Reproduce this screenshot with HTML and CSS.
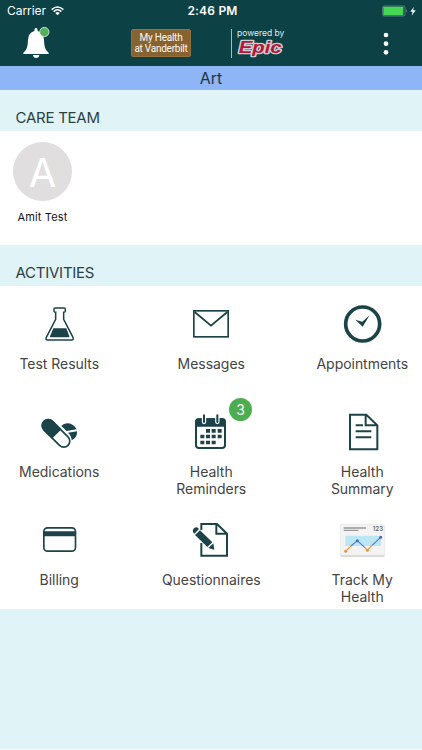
FILE: index.html
```html
<!DOCTYPE html>
<html lang="en">
<head>
<meta charset="utf-8">
<title>My Health</title>
<link rel="stylesheet" href="styles.css">
</head>
<body>
<header class="top">
  <div class="status">
    <div class="carrier"><span>Carrier</span>
      <svg width="13" height="10" viewBox="0 0 39 30"><g fill="none" stroke="#fff" stroke-width="4.500"><path d="M2 11Q19.500-5 37 11"/><path d="M8 17Q19.500 6 31 17"/></g><path d="M13 21Q19.500 15 26 21L19.500 28Z" fill="#fff"/></svg>
    </div>
    <div class="time">2:46 PM</div>
    <div class="power">
      <svg width="36" height="12" viewBox="0 0 108 36"><rect x="2" y="3" width="67" height="30" rx="5" fill="none" stroke="#7c9b9c" stroke-width="2"/><rect x="4" y="5" width="60" height="26" rx="2" fill="#45d754"/><path d="M73 13q5 5 0 10z" fill="#7c9b9c"/><path d="M96 5L85 20h7l-3 12 12-16h-8z" fill="#fff"/></svg>
    </div>
  </div>
  <div class="bar">
    <svg class="bell" width="30" height="36" viewBox="0 0 90 108"><path d="M40 18q0-9 5-9t5 9q18 5 19 26c1 26 5 31 14 39v4H7v-4c9-8 13-13 14-39q1-21 19-26zM36 90h19q-1 9-9.500 9T36 90z" fill="#fff"/><circle cx="70" cy="21" r="14" fill="#57ae5b" stroke="#dcebdc" stroke-width="2.500"/></svg>
    <div class="brand">My Health<br>at Vanderbilt</div>
    <div class="epic">
      <span class="powered">powered by</span>
      <svg width="50" height="21" viewBox="0 0 150 63"><text x="5" y="49" textLength="129" lengthAdjust="spacingAndGlyphs" class="logo">Epic</text></svg>
    </div>
    <svg class="more" width="6" height="24" viewBox="0 0 18 72"><g fill="#fff"><circle cx="9" cy="9" r="7"/><circle cx="9" cy="35" r="7"/><circle cx="9" cy="61" r="7"/></g></svg>
  </div>
</header>
<div class="person">Art</div>
<h2>CARE TEAM</h2>
<section class="team">
  <div class="member"><div class="avatar">A</div><div class="name">Amit Test</div></div>
</section>
<h2>ACTIVITIES</h2>
<main class="grid">
  <div class="item">
    <svg viewBox="87 12 180 180"><path d="M162 57q0-3 4-3h26q4 0 4 3v7q0 3-5 3v21l28 54q3 8-4 8h-72q-7 0-4-8l28-54V67q-5 0-5-3z" fill="none" stroke="#1b4349" stroke-width="4.500"/><path d="M160 115h39l9 24q1 3-2 3h-54q-3 0-2-3z" fill="#1b4349"/></svg>
    <div class="label">Test Results</div>
  </div>
  <div class="item">
    <svg viewBox="123 12 180 180"><g fill="none" stroke="#1b4349"><rect x="161.500" y="62.500" width="103" height="78" stroke-width="5"/><path d="M164 66l49 41 49-41" stroke-width="5.500"/></g></svg>
    <div class="label">Messages</div>
  </div>
  <div class="item">
    <svg viewBox="150 12 180 180"><circle cx="242" cy="102" r="51" fill="none" stroke="#1b4349" stroke-width="11"/><path d="M220 89l21 6 22-19-21 34z" fill="#1b4349"/></svg>
    <div class="label">Appointments</div>
  </div>
  <div class="item">
    <svg viewBox="87 21 180 180"><path d="M184 93C196 80 218 82 230 103L200 108zM204 113l27-4c1 13-5 22-16 27q0-12-11-23z" fill="#1b4349"/><g transform="rotate(45 168 115)"><rect x="117" y="97" width="102" height="36" rx="18" fill="#fff" stroke="#1b4349" stroke-width="5"/><path d="M171 94.500h-36a20.500 20.500 0 0 0 0 41h36z" fill="#1b4349"/></g></svg>
    <div class="label">Medications</div>
  </div>
  <div class="item">
    <svg viewBox="123 21 180 180"><rect x="168" y="73" width="87" height="86" rx="9" fill="#fff" stroke="#1b4349" stroke-width="6"/><path d="M166 95V79q0-9 9-9h73q9 0 9 9v16z" fill="#1b4349"/><g stroke="#fff" stroke-width="13" stroke-linecap="round"><path d="M192 62v19M232 62v19"/></g><g stroke="#1b4349" stroke-width="6" stroke-linecap="round"><path d="M192 61v20M232 61v20"/></g><path d="M198 102h12v11h-12zM215 102h12v11h-12zM233 102h12v11h-12zM181 119h12v11h-12zM198 119h12v11h-12zM215 119h12v11h-12zM233 119h12v11h-12zM181 137h12v11h-12zM198 137h12v11h-12zM215 137h12v11h-12z" fill="#1b4349"/></svg>
    <span class="badge">3</span>
    <div class="label">Health<br>Reminders</div>
  </div>
  <div class="item">
    <svg viewBox="150 21 180 180"><path d="M204 59h49l33 32v72h-82zM251 59v32h35M221 91h22M221 109h47M221 127h47" fill="none" stroke="#1b4349" stroke-width="6"/></svg>
    <div class="label">Health<br>Summary</div>
  </div>
  <div class="item">
    <svg viewBox="87 0 180 180"><rect x="131.500" y="53.500" width="95" height="70" rx="11" fill="none" stroke="#1b4349" stroke-width="5"/><path d="M131 64h96v15h-96z" fill="#1b4349"/></svg>
    <div class="label">Billing</div>
  </div>
  <div class="item">
    <svg viewBox="123 0 180 180"><path d="M184 60V42h47l30 29v66h-77v-38M229 42v29h32" fill="none" stroke="#1b4349" stroke-width="6"/><path d="M170 71l13-12 35 34 4 26-22-8-35-35z" fill="#fff"/><path d="M161 69q-6-7 1-14 8-7 14 1l1 1-14 14zM165 75l15-14 37 36-15 14zM205 114l15-14 3 19z" fill="#1b4349"/></svg>
    <div class="label">Questionnaires</div>
  </div>
  <div class="item">
    <svg viewBox="150 0 180 180"><rect x="175" y="43" width="133" height="96" rx="4" fill="#f3f3f4" stroke="#e6e6e6" stroke-width="2"/><path d="M176 138h131" stroke="#c5c5c5" stroke-width="3"/><path d="M185 54h67M185 61h44" stroke="#98989b" stroke-width="4"/><text x="272" y="63" textLength="31" class="digits">123</text><path d="M190 77h107v31H190z" fill="#bce6f4"/><g fill="none" stroke-width="3.500"><path d="M191 124l16-16M249 113l7 8 14-15" stroke="#e9963b"/><path d="M207 108l19-16 23 21M270 106l26-24" stroke="#5479c3"/></g><g fill="#e9963b"><circle cx="191" cy="124" r="4.500"/><circle cx="256" cy="121" r="4.500"/></g><g fill="#416bc0"><circle cx="226" cy="92" r="4.500"/><circle cx="296" cy="82" r="4.500"/></g></svg>
    <div class="label">Track My<br>Health</div>
  </div>
</main>
</body>
</html>
```
FILE: styles.css
```css
* { box-sizing: border-box; }
html { background: #fff; }
body { margin: 0; height: 749px; background: #e0f3f7; font-family: Inter, "Liberation Sans", sans-serif; color: #444; overflow: hidden; }
svg { display: block; }
.top { height: 66px; background: #0c4146; color: #fff; }
.status { height: 22px; display: grid; grid-template-columns: 1fr auto 1fr; align-items: center; padding: 0 4px 0 7px; font-size: 12px; line-height: 22px; }
.carrier { display: flex; align-items: center; gap: 5px; letter-spacing: -.05px; }
.time { font-weight: 600; font-size: 12px; letter-spacing: .2px; }
.power { display: flex; justify-content: flex-end; }
.bar { height: 44px; display: flex; align-items: flex-start; }
.bell { margin: 3px 0 0 21px; }
.brand { margin: 7px 0 0 80px; width: 60px; height: 28px; border-radius: 2px; background: #876332; border: 1px solid #93703c; font: 10px/11px Roboto, sans-serif; letter-spacing: -.25px; text-align: center; white-space: nowrap; padding-top: 2px; color: #fffaf0; }
.epic { margin: 7px 0 0 40px; height: 29px; border-left: 1px solid #aabbbc; padding-left: 5px; width: 59px; display: flex; flex-direction: column; }
.powered { font: 8.500px/8px Inter, sans-serif; white-space: nowrap; letter-spacing: 0; color: #e2eaea; }
.epic svg { overflow: visible; }
.logo { font: italic 700 51px "Liberation Sans", sans-serif; fill: #b51637; stroke: #d0ccd0; stroke-width: 8px; stroke-linejoin: round; paint-order: stroke; }
.more { margin: 10px 0 0 93px; }
.person { height: 24px; background: #8eb5f5; text-align: center; font-size: 16px; line-height: 24px; color: #25333f; }
h2 { margin: 0; height: 41px; padding: 14px 0 0 15.500px; font-size: 15px; line-height: 27px; font-weight: 400; letter-spacing: -.25px; color: #2b4145; }
.team { height: 114px; padding: 11px 0 0 13px; background: #fff; }
.member { width: 59px; text-align: center; }
.avatar { width: 59px; height: 59px; border-radius: 50%; background: #e0dedf; color: #fff; font-size: 40px; font-weight: 400; line-height: 61px; }
.name { margin-top: 8px; font-size: 11px; line-height: 16px; letter-spacing: .15px; white-space: nowrap; color: #111; }
.grid { height: 323px; padding-top: 8px; background: #fff; display: grid; grid-template-columns: 118px 186px 116px; grid-template-rows: 108px 108px 99px; }
.item { position: relative; display: flex; flex-direction: column; align-items: center; }
.item svg { width: 60px; height: 60px; flex: none; }
.label { margin-top: 1px; padding-left: .5px; font-size: 14px; line-height: 17px; letter-spacing: -.04px; text-align: center; white-space: nowrap; }
.badge { position: absolute; left: 111px; top: -4px; width: 23px; height: 23px; border-radius: 50%; background: #4dad51; color: #fff; font-size: 14px; line-height: 23px; text-align: center; }
.digits { font: 600 18px Inter, sans-serif; fill: #666; }
```
